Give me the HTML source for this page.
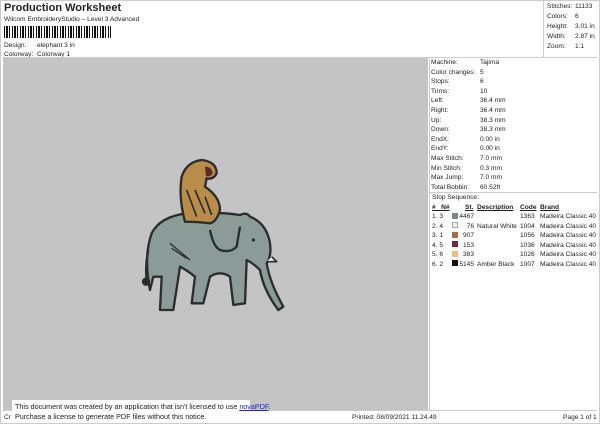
<!DOCTYPE html><html><head><style>
body{margin:0;width:600px;height:424px;background:#fff;position:relative;overflow:hidden;font-family:"Liberation Sans",sans-serif;font-size:6.6px;color:#222}
.a{position:absolute;white-space:nowrap;line-height:9px}
</style></head><body>
<div class="a" style="left:0;top:0;width:598px;height:422px;border:1px solid #ccc"></div>
<div class="a" style="left:4px;top:2px;font-size:11px;font-weight:bold;line-height:13px">Production Worksheet</div>
<div class="a" style="left:4px;top:15px">Wilcom EmbroideryStudio – Level 3 Advanced</div>
<div class="a" style="left:4px;top:26px;width:107px;height:12px;background:repeating-linear-gradient(90deg,#111 0 1px,#fff 1px 2px,#111 2px 4px,#fff 4px 5px,#111 5px 6px,#fff 6px 8px)"></div>
<div class="a" style="left:4px;top:41px">Design:</div><div class="a" style="left:37px;top:41px">elephant 3 in</div>
<div class="a" style="left:4px;top:50px">Colorway:</div><div class="a" style="left:37px;top:50px">Colorway 1</div>
<div class="a" style="left:543px;top:1px;height:56px;border-left:1px solid #ccc"></div>
<div class="a" style="left:3px;top:57px;width:594px;border-top:1px solid #ccc"></div>
<div class="a" style="left:547px;top:2px;line-height:10px">Stitches:<br>Colors:<br>Height:<br>Width:<br>Zoom:</div>
<div class="a" style="left:575px;top:2px;line-height:10px">11133<br>6<br>3.01 in<br>2.87 in<br>1:1</div>
<div class="a" style="left:3px;top:58px;width:425px;height:352px;background:#c4c4c4"></div>
<div class="a" style="left:431px;top:58px;line-height:9.6px">Machine:<br>Color changes:<br>Stops:<br>Trims:<br>Left:<br>Right:<br>Up:<br>Down:<br>EndX:<br>EndY:<br>Max Stitch:<br>Min Stitch:<br>Max Jump:<br>Total Bobbin:</div>
<div class="a" style="left:480px;top:58px;line-height:9.6px">Tajima<br>5<br>6<br>10<br>36.4 mm<br>36.4 mm<br>38.3 mm<br>38.3 mm<br>0.00 in<br>0.00 in<br>7.0 mm<br>0.3 mm<br>7.0 mm<br>60.52ft</div>
<div class="a" style="left:429px;top:192px;width:168px;border-top:1px solid #ccc"></div>
<div class="a" style="left:432px;top:193px">Stop Sequence:</div>
<div class="a" style="left:432px;top:203px;font-weight:bold;text-decoration:underline">#&nbsp;&nbsp;&nbsp;N#</div>
<div class="a" style="left:465px;top:203px;font-weight:bold;text-decoration:underline">St.</div>
<div class="a" style="left:477px;top:203px;font-weight:bold;text-decoration:underline">Description</div>
<div class="a" style="left:520px;top:203px;font-weight:bold;text-decoration:underline">Code</div>
<div class="a" style="left:540px;top:203px;font-weight:bold;text-decoration:underline">Brand</div>
<div class="a" style="left:432px;top:212px;line-height:9.5px">1. 3<br>2. 4<br>3. 1<br>4. 5<br>5. 6<br>6. 2</div>
<div class="a" style="left:452px;top:213px;width:6px;height:6px;background:#7b8394"></div>
<div class="a" style="left:452px;top:222px;width:6px;height:6px;background:#eceef4;outline:1px solid #aaa;outline-offset:-1px"></div>
<div class="a" style="left:452px;top:232px;width:6px;height:6px;background:#a86a45"></div>
<div class="a" style="left:452px;top:241px;width:6px;height:6px;background:#6e2a2e"></div>
<div class="a" style="left:452px;top:251px;width:6px;height:6px;background:#f4b878"></div>
<div class="a" style="left:452px;top:260px;width:6px;height:6px;background:#111"></div>
<div class="a" style="left:458px;top:212px;line-height:9.5px;width:16px;text-align:right">4467<br>76<br>907<br>153<br>383<br>5145</div>
<div class="a" style="left:477px;top:212px;line-height:9.5px"><br>Natural White<br><br><br><br>Amber Black</div>
<div class="a" style="left:520px;top:212px;line-height:9.5px">1363<br>1004<br>1056<br>1036<br>1026<br>1007</div>
<div class="a" style="left:540px;top:212px;line-height:9.5px">Madeira Classic 40<br>Madeira Classic 40<br>Madeira Classic 40<br>Madeira Classic 40<br>Madeira Classic 40<br>Madeira Classic 40</div>
<div class="a" style="left:429px;top:58px;height:352px;border-left:1px solid #ccc"></div>
<div class="a" style="left:3px;top:410px;width:594px;border-top:1px solid #ccc"></div>
<div class="a" style="left:4px;top:413px">Cr</div>
<div class="a" style="left:352px;top:413px">Printed: 08/09/2021 11.24.49</div>
<div class="a" style="left:563px;top:413px">Page 1 of 1</div>
<div class="a" style="left:12px;top:400px;width:238px;height:22px;background:#fff"></div>
<div class="a" style="left:15px;top:402px;font-size:7.2px;line-height:10px">This document was created by an application that isn't licensed to use <span style="color:#22c;text-decoration:underline">novaPDF</span>.<br>Purchase a license to generate PDF files without this notice.</div>
<svg class="a" style="left:120px;top:90px" width="190" height="230" viewBox="0 0 570 690">
<g stroke="#2a2d2c" stroke-width="7" stroke-linejoin="round" fill="#8b9c98">
<path d="M90 600 Q70 500 95 430 Q120 380 200 370 Q300 365 360 375 Q380 365 390 380 Q440 400 450 460 Q455 500 440 520 Q450 580 490 650 L475 660 Q430 600 420 540 Q400 520 380 510 L375 640 L340 645 L330 560 Q300 540 270 560 L250 640 L215 640 L225 560 Q200 540 180 530 L160 660 L120 660 L125 560 Q110 560 100 560 Z"/>
<path d="M85 480 Q75 530 80 570" fill="none"/>
<circle cx="78" cy="575" r="9" fill="#2a2d2c"/>
<path d="M270 420 Q280 470 300 480 Q330 490 350 470 L360 410" fill="none"/>
<path d="M440 515 L470 515 L455 500" fill="#e8eae6" stroke-width="5"/>
<path d="M150 460 L210 510 M155 475 L200 505" fill="none" stroke-width="4"/>
</g>
<circle cx="400" cy="450" r="5" fill="#2a2d2c"/>
<path d="M195 395 Q175 320 185 260 Q200 215 245 210 Q290 215 290 250 Q280 270 260 265 L255 290 Q300 320 300 360 Q290 395 270 400 Q230 395 195 395 Z" fill="#b98c4c" stroke="#2a2d2c" stroke-width="7"/>
<path d="M255 230 Q275 230 278 250 Q270 262 258 258 Z" fill="#5a2a28"/>
<path d="M200 300 L230 380 M225 300 L255 370 M255 320 L275 375" stroke="#2a2d2c" stroke-width="5" fill="none"/>
</svg>
</body></html>
